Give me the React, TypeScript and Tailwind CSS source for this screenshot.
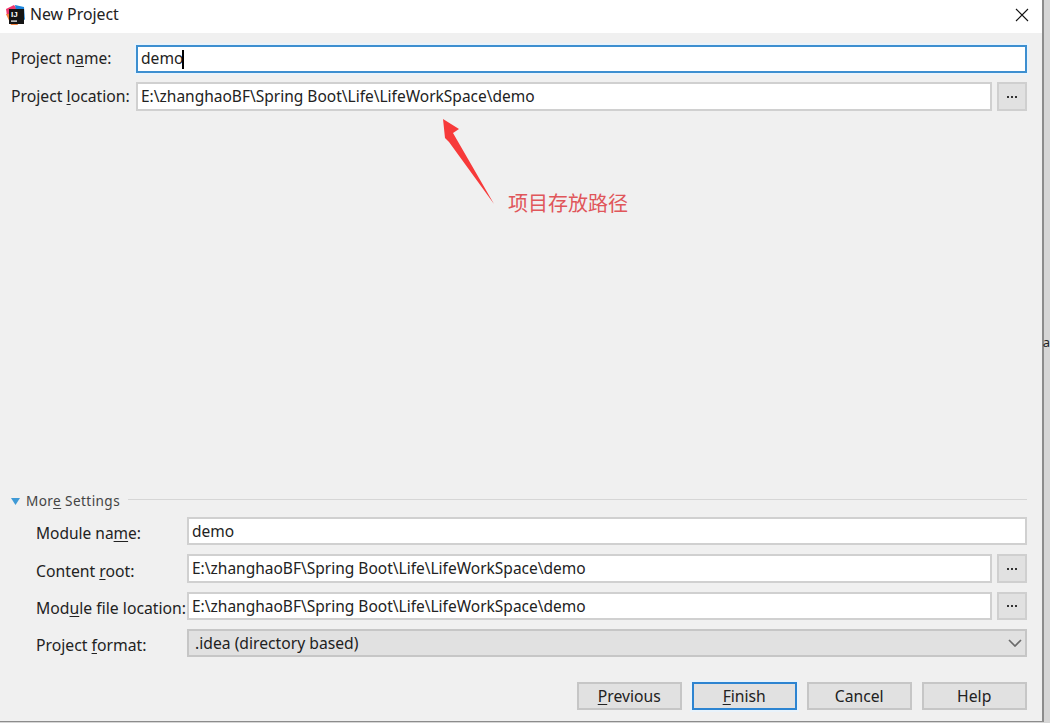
const FONT = "font-['Noto_Sans','Noto_Sans_CJK_SC',sans-serif]";

// Underlines the mnemonic letter the way the Swing labels do
function Mnemonic({ before, letter, after }: { before: string; letter: string; after: string }) {
  return (
    <>
      {before}
      <span className="underline underline-offset-2">{letter}</span>
      {after}
    </>
  );
}

function TextBox({ value, focused, tall }: { value: string; focused?: boolean; tall?: boolean }) {
  if (focused) {
    return (
      <div className="flex-1 h-[28px] flex items-center pl-[3px] bg-white border-2 border-[#3d8fd0] ring-2 ring-[#e9f3fb]">
        <span className="text-[15.6px] text-[#222] whitespace-nowrap">{value}</span>
        <span className="w-[2px] h-[19px] -ml-[1px] bg-black" />
      </div>
    );
  }
  return (
    <div className={`flex-1 ${tall ? 'h-[29px] pb-[1px]' : 'h-[28px]'} flex items-center pl-[3px] bg-white border-2 border-[#d0d0d0]`}>
      <span className="text-[15.5px] leading-[20px] text-[#222] whitespace-nowrap">{value}</span>
    </div>
  );
}

function BrowseButton({ tall }: { tall?: boolean }) {
  return (
    <div className={`w-[30px] ${tall ? 'h-[29px]' : 'h-[28px]'} ml-[5px] shrink-0 flex items-center justify-center bg-[#e1e1e1] border-2 border-[#cfcfcf]`}>
      <span className="flex gap-[2px]">
        <span className="w-[2px] h-[2px] bg-[#333]" />
        <span className="w-[2px] h-[2px] bg-[#333]" />
        <span className="w-[2px] h-[2px] bg-[#333]" />
      </span>
    </div>
  );
}

function FormButton({ children, primary }: { children: React.ReactNode; primary?: boolean }) {
  return (
    <div
      className={
        primary
          ? 'w-[105px] h-[28px] flex items-center justify-center pb-[1px] bg-[#e1e1e1] border-2 border-[#2c84d1] ring-2 ring-[#e9f3fb] text-[15.7px] leading-[20px] text-[#222]'
          : 'w-[105px] h-[28px] flex items-center justify-center pb-[1px] bg-[#e1e1e1] border-2 border-[#c6c6c6] text-[15.7px] leading-[20px] text-[#222]'
      }
    >
      {children}
    </div>
  );
}

function IdeaLogo() {
  return (
    <svg width="20" height="20" viewBox="0 0 20 20" className="shrink-0">
      <path d="M1 4 L9 0 L12 4 L9 11 L2 11 Z" fill="#f0386e" />
      <path d="M10 0 L19 2 L20 15 L12 10 Z" fill="#1b84dc" />
      <path d="M1 9 L6 20 L13 20 L8 9 Z" fill="#f4803c" />
      <rect x="4" y="4" width="15" height="15" fill="#141414" />
      <text x="6" y="12" fontSize="8" fontWeight="700" fill="#fff" fontFamily="'Liberation Sans', sans-serif">IJ</text>
      <rect x="6" y="15.5" width="6" height="1.2" fill="#fff" />
    </svg>
  );
}

export default function App() {
  return (
    <div className={`w-[1050px] h-[723px] flex bg-[#d6d6d6] overflow-hidden relative ${FONT}`}>
      {/* Dialog */}
      <div className="w-[1045px] h-[722px] flex flex-col bg-[#f0f0f0] border-r-2 border-b border-[#8c8c8c]">
        {/* Title bar */}
        <div className="h-[33px] shrink-0 flex items-center bg-white pl-[5px] pr-[13px] pb-[3px]">
          <IdeaLogo />
          <span className="ml-[5px] text-[15.8px] text-[#222]">New Project</span>
          <svg width="14" height="14" viewBox="0 0 14 14" className="ml-auto">
            <path d="M1 1 L13 13 M13 1 L1 13" stroke="#111" strokeWidth="1.1" />
          </svg>
        </div>

        <div className="flex-1 flex flex-col pl-[11px] pr-[15px]">
          {/* Project fields */}
          <div className="flex items-center h-[28px] mt-[12px]">
            <label className="w-[125px] shrink-0 text-[15.5px] text-[#222]">
              <Mnemonic before="Project n" letter="a" after="me:" />
            </label>
            <TextBox value="demo" focused />
          </div>
          <div className="flex items-center h-[29px] mt-[9px]">
            <label className="w-[125px] shrink-0 text-[15.75px] text-[#222] whitespace-nowrap">
              <Mnemonic before="Project " letter="l" after="ocation:" />
            </label>
            <TextBox value="E:\zhanghaoBF\Spring Boot\Life\LifeWorkSpace\demo" tall />
            <BrowseButton tall />
          </div>

          {/* More Settings */}
          <div className="flex items-center h-[20px] mt-[380px]">
            <svg width="9" height="7" viewBox="0 0 9 7" className="shrink-0">
              <path d="M0 0 H9 L4.5 7 Z" fill="#3f9ad6" />
            </svg>
            <span className="ml-[6px] text-[13.6px] text-[#444] tracking-[0.4px]">
              <Mnemonic before="Mor" letter="e" after=" Settings" />
            </span>
            <div className="flex-1 h-px bg-[#d6d6d6] ml-[8px] mb-[4px]" />
          </div>

          <div className="flex flex-col gap-[9px] mt-[6px] pl-[25px]">
            <div className="flex items-center">
              <label className="w-[151px] shrink-0 text-[15.5px] leading-[20px] text-[#222] pt-[4px]">
                <Mnemonic before="Module na" letter="m" after="e:" />
              </label>
              <TextBox value="demo" />
            </div>
            <div className="flex items-center">
              <label className="w-[151px] shrink-0 text-[15.75px] leading-[20px] text-[#222] pt-[4px]">
                <Mnemonic before="Content " letter="r" after="oot:" />
              </label>
              <TextBox value="E:\zhanghaoBF\Spring Boot\Life\LifeWorkSpace\demo" tall />
              <BrowseButton tall />
            </div>
            <div className="flex items-center">
              <label className="w-[151px] shrink-0 text-[15.75px] leading-[20px] text-[#222] whitespace-nowrap pt-[4px]">
                <Mnemonic before="Mod" letter="u" after="le file location:" />
              </label>
              <TextBox value="E:\zhanghaoBF\Spring Boot\Life\LifeWorkSpace\demo" />
              <BrowseButton />
            </div>
            <div className="flex items-center">
              <label className="w-[151px] shrink-0 text-[15.75px] leading-[20px] text-[#222] pt-[4px]">
                <Mnemonic before="Project " letter="f" after="ormat:" />
              </label>
              <div className="flex-1 h-[28px] flex items-center justify-between pl-[6px] pr-[3px] bg-[#e1e1e1] border-2 border-[#c6c6c6]">
                <span className="text-[15.7px] leading-[20px] text-[#222]">.idea (directory based)</span>
                <svg width="14" height="8" viewBox="0 0 14 8">
                  <path d="M1 1 L7 7 L13 1" fill="none" stroke="#6a6a6a" strokeWidth="1.7" />
                </svg>
              </div>
            </div>
          </div>

          {/* Footer buttons */}
          <div className="flex justify-end gap-[10px] mt-[25px]">
            <FormButton>
              <Mnemonic before="" letter="P" after="revious" />
            </FormButton>
            <FormButton primary>
              <Mnemonic before="" letter="F" after="inish" />
            </FormButton>
            <FormButton>Cancel</FormButton>
            <FormButton>Help</FormButton>
          </div>
        </div>
      </div>

      {/* Window behind the dialog */}
      <div className="flex-1 flex items-center h-full pb-[38px]">
        <span className="text-[13px] text-[#222] leading-none -ml-[1px]">a</span>
      </div>

      {/* Red annotation over the dialog */}
      <svg width="60" height="90" viewBox="0 0 60 90" className="absolute left-[440px] top-[117px]">
        <path d="M3 2 L19 12 L13 16 L54 87 L9 25 L5 21 Z" fill="#f73a3a" />
      </svg>
      <span className="absolute left-[508px] top-[190px] text-[20px] leading-[26px] text-[#e0565a] font-['Noto_Sans_CJK_SC',sans-serif]">
        项目存放路径
      </span>
    </div>
  );
}
